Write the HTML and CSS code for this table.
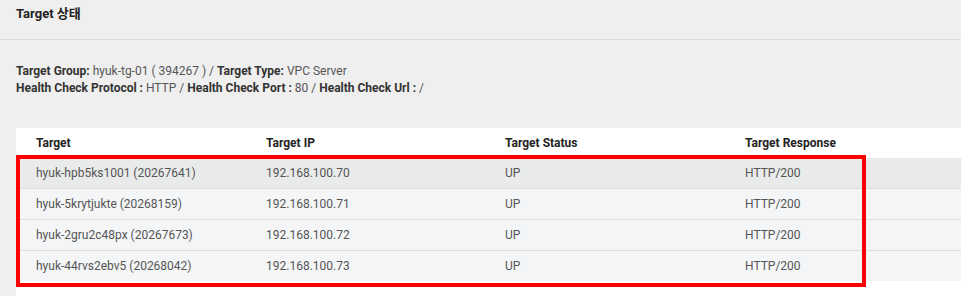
FILE: index.html
```html
<!DOCTYPE html>
<html lang="ko">
<head>
<meta charset="utf-8">
<title>Target 상태</title>
<link rel="stylesheet" href="styles.css">
</head>
<body>
<div class="page">
  <div class="page-title">Target 상태</div>
  <div class="info">
    <div><b>Target Group:</b> hyuk-tg-01 ( 394267 ) / <b>Target Type:</b> VPC Server</div>
    <div><b>Health Check Protocol :</b> HTTP / <b>Health Check Port :</b> 80 / <b>Health Check Url :</b> /</div>
  </div>
  <div class="table">
    <div class="row head">
      <div class="cell">Target</div>
      <div class="cell">Target IP</div>
      <div class="cell">Target Status</div>
      <div class="cell">Target Response</div>
    </div>
    <div class="row active">
      <div class="cell">hyuk-hpb5ks1001 (20267641)</div>
      <div class="cell">192.168.100.70</div>
      <div class="cell">UP</div>
      <div class="cell">HTTP/200</div>
    </div>
    <div class="row">
      <div class="cell">hyuk-5krytjukte (20268159)</div>
      <div class="cell">192.168.100.71</div>
      <div class="cell">UP</div>
      <div class="cell">HTTP/200</div>
    </div>
    <div class="row">
      <div class="cell">hyuk-2gru2c48px (20267673)</div>
      <div class="cell">192.168.100.72</div>
      <div class="cell">UP</div>
      <div class="cell">HTTP/200</div>
    </div>
    <div class="row last">
      <div class="cell">hyuk-44rvs2ebv5 (20268042)</div>
      <div class="cell">192.168.100.73</div>
      <div class="cell">UP</div>
      <div class="cell">HTTP/200</div>
    </div>
    <div class="highlight"></div>
  </div>
</div>
</body>
</html>
```
FILE: styles.css
```css
html, body {
  margin: 0;
  padding: 0;
}
body {
  background: #efefef;
  font-family: Roboto, "Noto Sans CJK KR", sans-serif;
  color: #555;
  font-size: 12px;
  overflow: hidden;
}
.page {
  width: 961px;
}
.page-title {
  height: 40px;
  box-sizing: border-box;
  padding: 5px 16px 0;
  line-height: 18px;
  font-size: 13px;
  font-weight: bold;
  color: #222;
  border-bottom: 1px solid #dddddd;
}
.info {
  margin-top: 23px;
  padding: 0 16px;
  line-height: 17px;
  color: #555;
}
.info b {
  color: #333;
  font-weight: bold;
}
.table {
  position: relative;
  margin-top: 31px;
  margin-left: 16px;
  background: #fff;
  padding-bottom: 16px;
}
.row {
  display: grid;
  grid-template-columns: 230px 239px 240px 1fr;
  padding-left: 20px;
  height: 31px;
  box-sizing: border-box;
  align-items: center;
  background: #f4f5f7;
  border-bottom: 1px solid #dcdddf;
}
.row.head {
  height: 30px;
  background: #fff;
  border-bottom: none;
  color: #222;
  font-weight: bold;
}
.row.active {
  background: #e9eaea;
}
.row.last {
  border-bottom: none;
  height: 30px;
}
.cell {
  white-space: nowrap;
}
.highlight {
  position: absolute;
  left: 0;
  top: 27px;
  width: 850px;
  height: 132px;
  box-sizing: border-box;
  border: 4px solid #ff0000;
  pointer-events: none;
}
```
